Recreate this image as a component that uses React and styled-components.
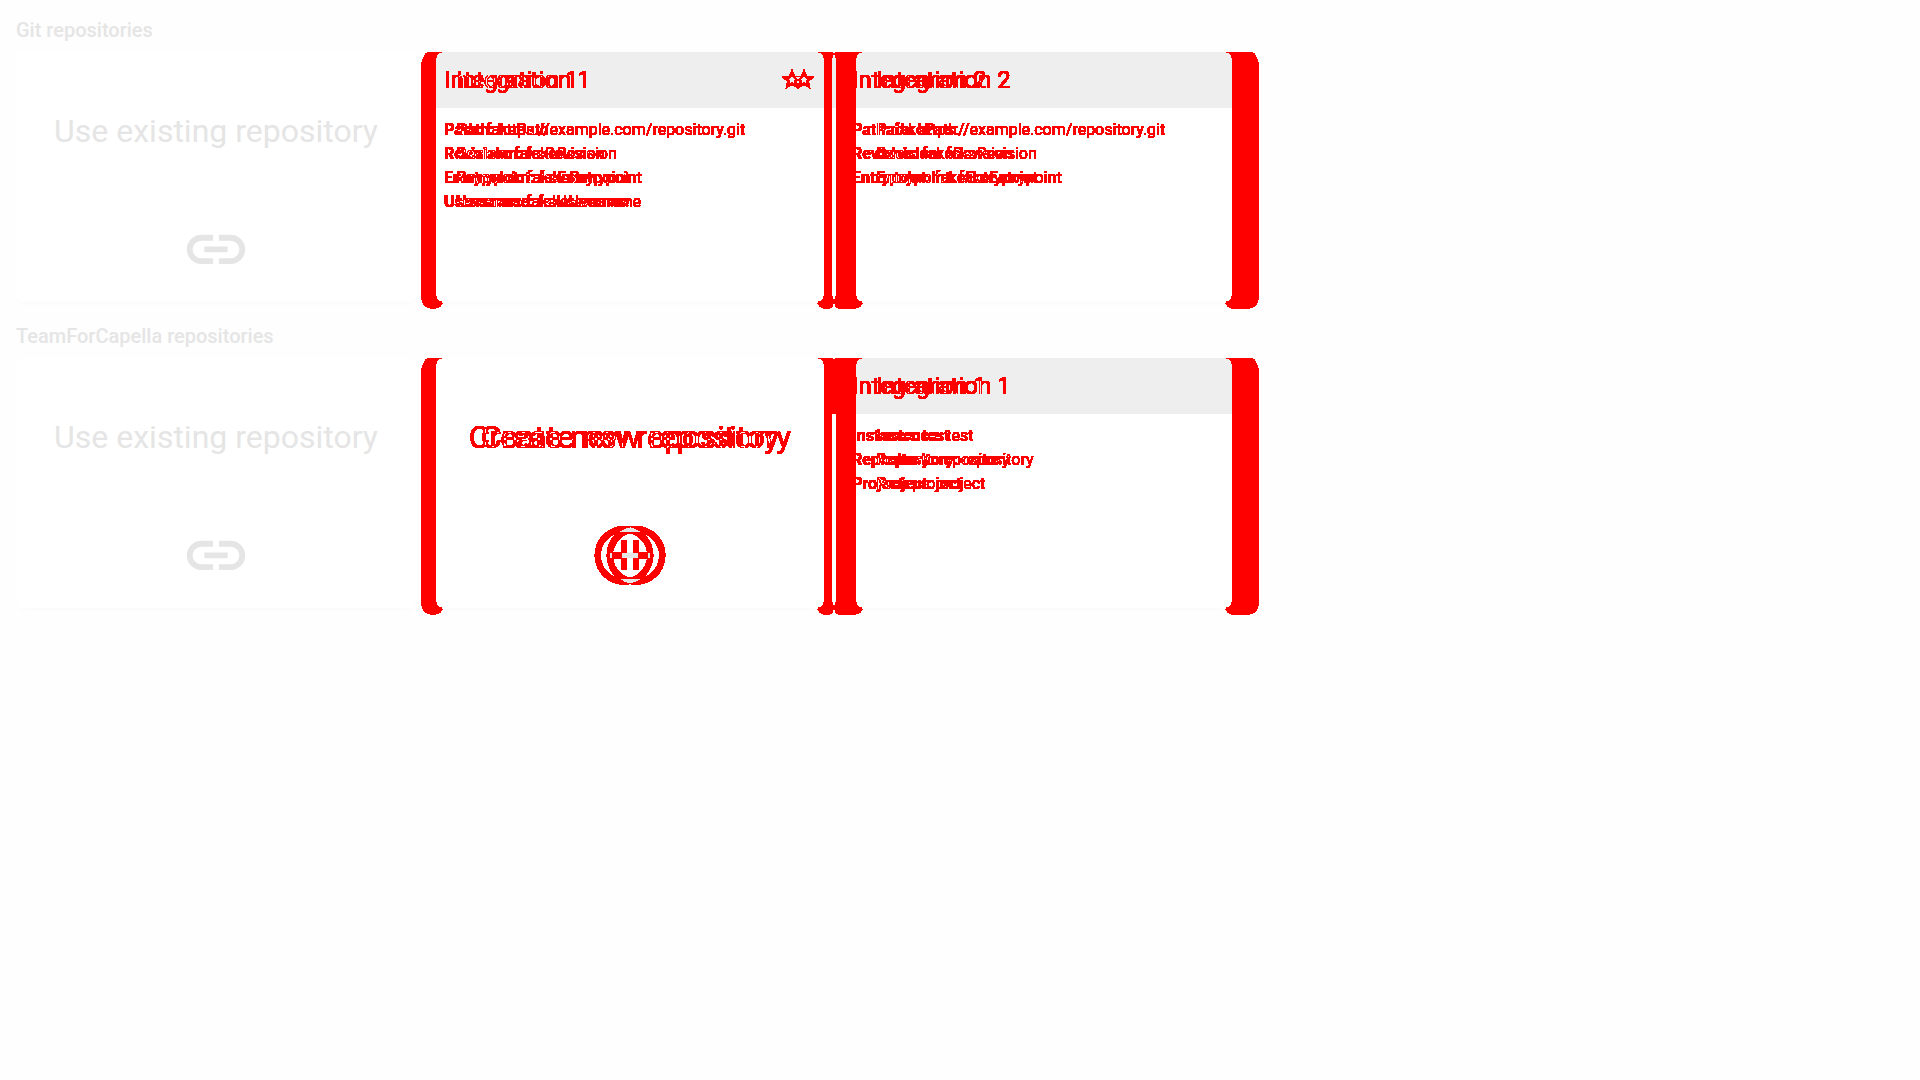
import React from "react";
import styled, { createGlobalStyle, css } from "styled-components";

const GlobalStyle = createGlobalStyle`
  body { margin: 0; background: #fefefe; font-family: Roboto, "Liberation Sans", sans-serif; }
`;

const Page = styled.main`
  display: grid;
  width: 1920px;
  height: 1080px;
  overflow: hidden;
`;

const baseTones = css`
  --body: #ffffff;
  --header: #eeeeee;
  --ink: #e5e5e5;
  --shadow: rgba(0, 0, 0, 0.01);
`;

const diffTones = css`
  --body: #0ff;
  --header: #ff0;
  --ink: #000;
  --shadow: rgba(0, 0, 255, 0.1);
  background: #000;
`;

const Layer = styled.div`
  grid-area: 1 / 1;
  padding: 14px 16px 0;
  color: var(--ink);
  ${(p) => (p.$base ? baseTones : diffTones)}
  ${(p) => p.$blend && "mix-blend-mode: difference;"}
`;

const DiffGroup = styled.div`
  grid-area: 1 / 1;
  display: grid;
  background: #000;
  filter: url(#changed-pixels);
`;

const FilterDefs = styled.svg`
  grid-area: 1 / 1;
  width: 0;
  height: 0;
`;

const Section = styled.section`
  height: 306px;
`;

const Heading = styled.h2`
  margin: 0;
  height: 38px;
  font-size: 20px;
  line-height: 32px;
  font-weight: 500;
`;

const Cards = styled.div`
  display: flex;
  gap: ${(p) => p.$gap}px;
`;

const Slot = styled.div`
  width: 400px;
  height: 250px;
`;

const Card = styled.article`
  display: flex;
  flex-direction: column;
  width: 400px;
  height: 250px;
  border-radius: 6px;
  overflow: hidden;
  background: var(--body);
  box-shadow: 0 4px 6px -1px var(--shadow), 0 2px 4px -2px var(--shadow);
`;

const CardHeader = styled.header`
  box-sizing: border-box;
  display: flex;
  align-items: center;
  justify-content: space-between;
  height: 56px;
  padding: 0 20px;
  background: var(--header);
  font-size: 24px;
  line-height: 32px;
`;

const CardBody = styled.div`
  padding: 10px 20px;
  font-size: 16px;
  line-height: 24px;
`;

const Label = styled.span`
  font-weight: 700;
`;

const ActionBody = styled.div`
  display: flex;
  flex-direction: column;
  align-items: center;
  justify-content: space-between;
  height: 100%;
  box-sizing: border-box;
  padding: 59px 0 18px;
  font-size: 32px;
  line-height: 40px;
`;

const Icon = styled.svg`
  display: block;
  width: ${(p) => p.$size}px;
  height: ${(p) => p.$size}px;
  fill: var(--ink);
`;

const glyphs = {
  link: {
    box: "0 -966 960 960",
    d: "M440-280H280q-83 0-141.5-58.5T80-480q0-83 58.5-141.5T280-680h160v80H280q-50 0-85 35t-35 85q0 50 35 85t85 35h160v80ZM320-440v-80h320v80H320Zm200 160v-80h160q50 0 85-35t35-85q0-50-35-85t-85-35H520v-80h160q83 0 141.5 58.5T880-480q0 83-58.5 141.5T680-280H520Z",
  },
  add: {
    box: "0 -966 960 960",
    d: "M440-280h80v-160h160v-80H520v-160h-80v160H280v80h160v160Zm40 200q-83 0-156-31.500t-127-85.500q-54-54-85.500-127T80-480q0-83 31.500-156t85.500-127q54-54 127-85.500T480-880q83 0 156 31.500t127 85.500q54 54 85.500 127T880-480q0 83-31.500 156t-85.500 127q-54 54-127 85.500T480-80Zm0-80q134 0 227-93t93-227q0-134-93-227t-227-93q-134 0-227 93t-93 227q0 134 93 227t227 93Z",
  },
  star: {
    box: "0 -940 960 960",
    d: "m354-287 126-76 126 77-33-144 111-96-146-13-58-136-58 135-146 13 111 97-33 143ZM233-120l65-281L80-590l288-25 112-265 112 265 288 25-218 189 65 281-247-149-247 149Z",
  },
};

function Glyph({ name, size }) {
  return (
    <Icon $size={size} viewBox={glyphs[name].box}>
      <path d={glyphs[name].d} />
    </Icon>
  );
}

function ActionCard({ title, icon }) {
  return (
    <Card>
      <ActionBody>
        <span>{title}</span>
        <Glyph name={icon} size={70} />
      </ActionBody>
    </Card>
  );
}

function RepositoryCard({ title, starred, rows }) {
  return (
    <Card>
      <CardHeader>
        <span>{title}</span>
        {starred && <Glyph name="star" size={24} />}
      </CardHeader>
      <CardBody>
        {rows.map(([label, value]) => (
          <div key={label}>
            <Label>{label}:</Label> {value}
          </div>
        ))}
      </CardBody>
    </Card>
  );
}

function Revision({ gap, path, blend }) {
  const git = [
    ["Path", path],
    ["Revision", "fakeRevision"],
    ["Entrypoint", "fakeEntrypoint"],
  ];
  return (
    <Layer $blend={blend}>
      <Section>
        <Heading />
        <Cards $gap={gap}>
          <Slot />
          <RepositoryCard title="Integration 1" starred rows={[...git, ["Username", "fakeUsername"]]} />
          <RepositoryCard title="Integration 2" rows={git} />
        </Cards>
      </Section>
      <Section>
        <Heading />
        <Cards $gap={gap}>
          <Slot />
          <ActionCard title="Create new repository" icon="add" />
          <RepositoryCard
            title="Integration 1"
            rows={[["Instance", "test"], ["Repository", "repository"], ["Project", "project"]]}
          />
        </Cards>
      </Section>
    </Layer>
  );
}

export default function App() {
  return (
    <>
      <GlobalStyle />
      <Page>
        <FilterDefs>
          <filter id="changed-pixels" x="0" y="0" width="1" height="1" colorInterpolationFilters="sRGB">
            <feColorMatrix values="0 0 0 0 1  0 0 0 0 0  0 0 0 0 0  255 255 255 0 -2" />
          </filter>
        </FilterDefs>
        <Layer $base>
          <Section>
            <Heading>Git repositories</Heading>
            <Cards $gap={8}>
              <ActionCard title="Use existing repository" icon="link" />
              <Card><CardHeader /></Card>
              <Card><CardHeader /></Card>
            </Cards>
          </Section>
          <Section>
            <Heading>TeamForCapella repositories</Heading>
            <Cards $gap={8}>
              <ActionCard title="Use existing repository" icon="link" />
              <ActionCard icon="add" />
              <Card><CardHeader /></Card>
            </Cards>
          </Section>
        </Layer>
        <DiffGroup>
          <Revision gap={8} path="fakePath" />
          <Revision gap={20} path="https://example.com/repository.git" blend />
        </DiffGroup>
      </Page>
    </>
  );
}
